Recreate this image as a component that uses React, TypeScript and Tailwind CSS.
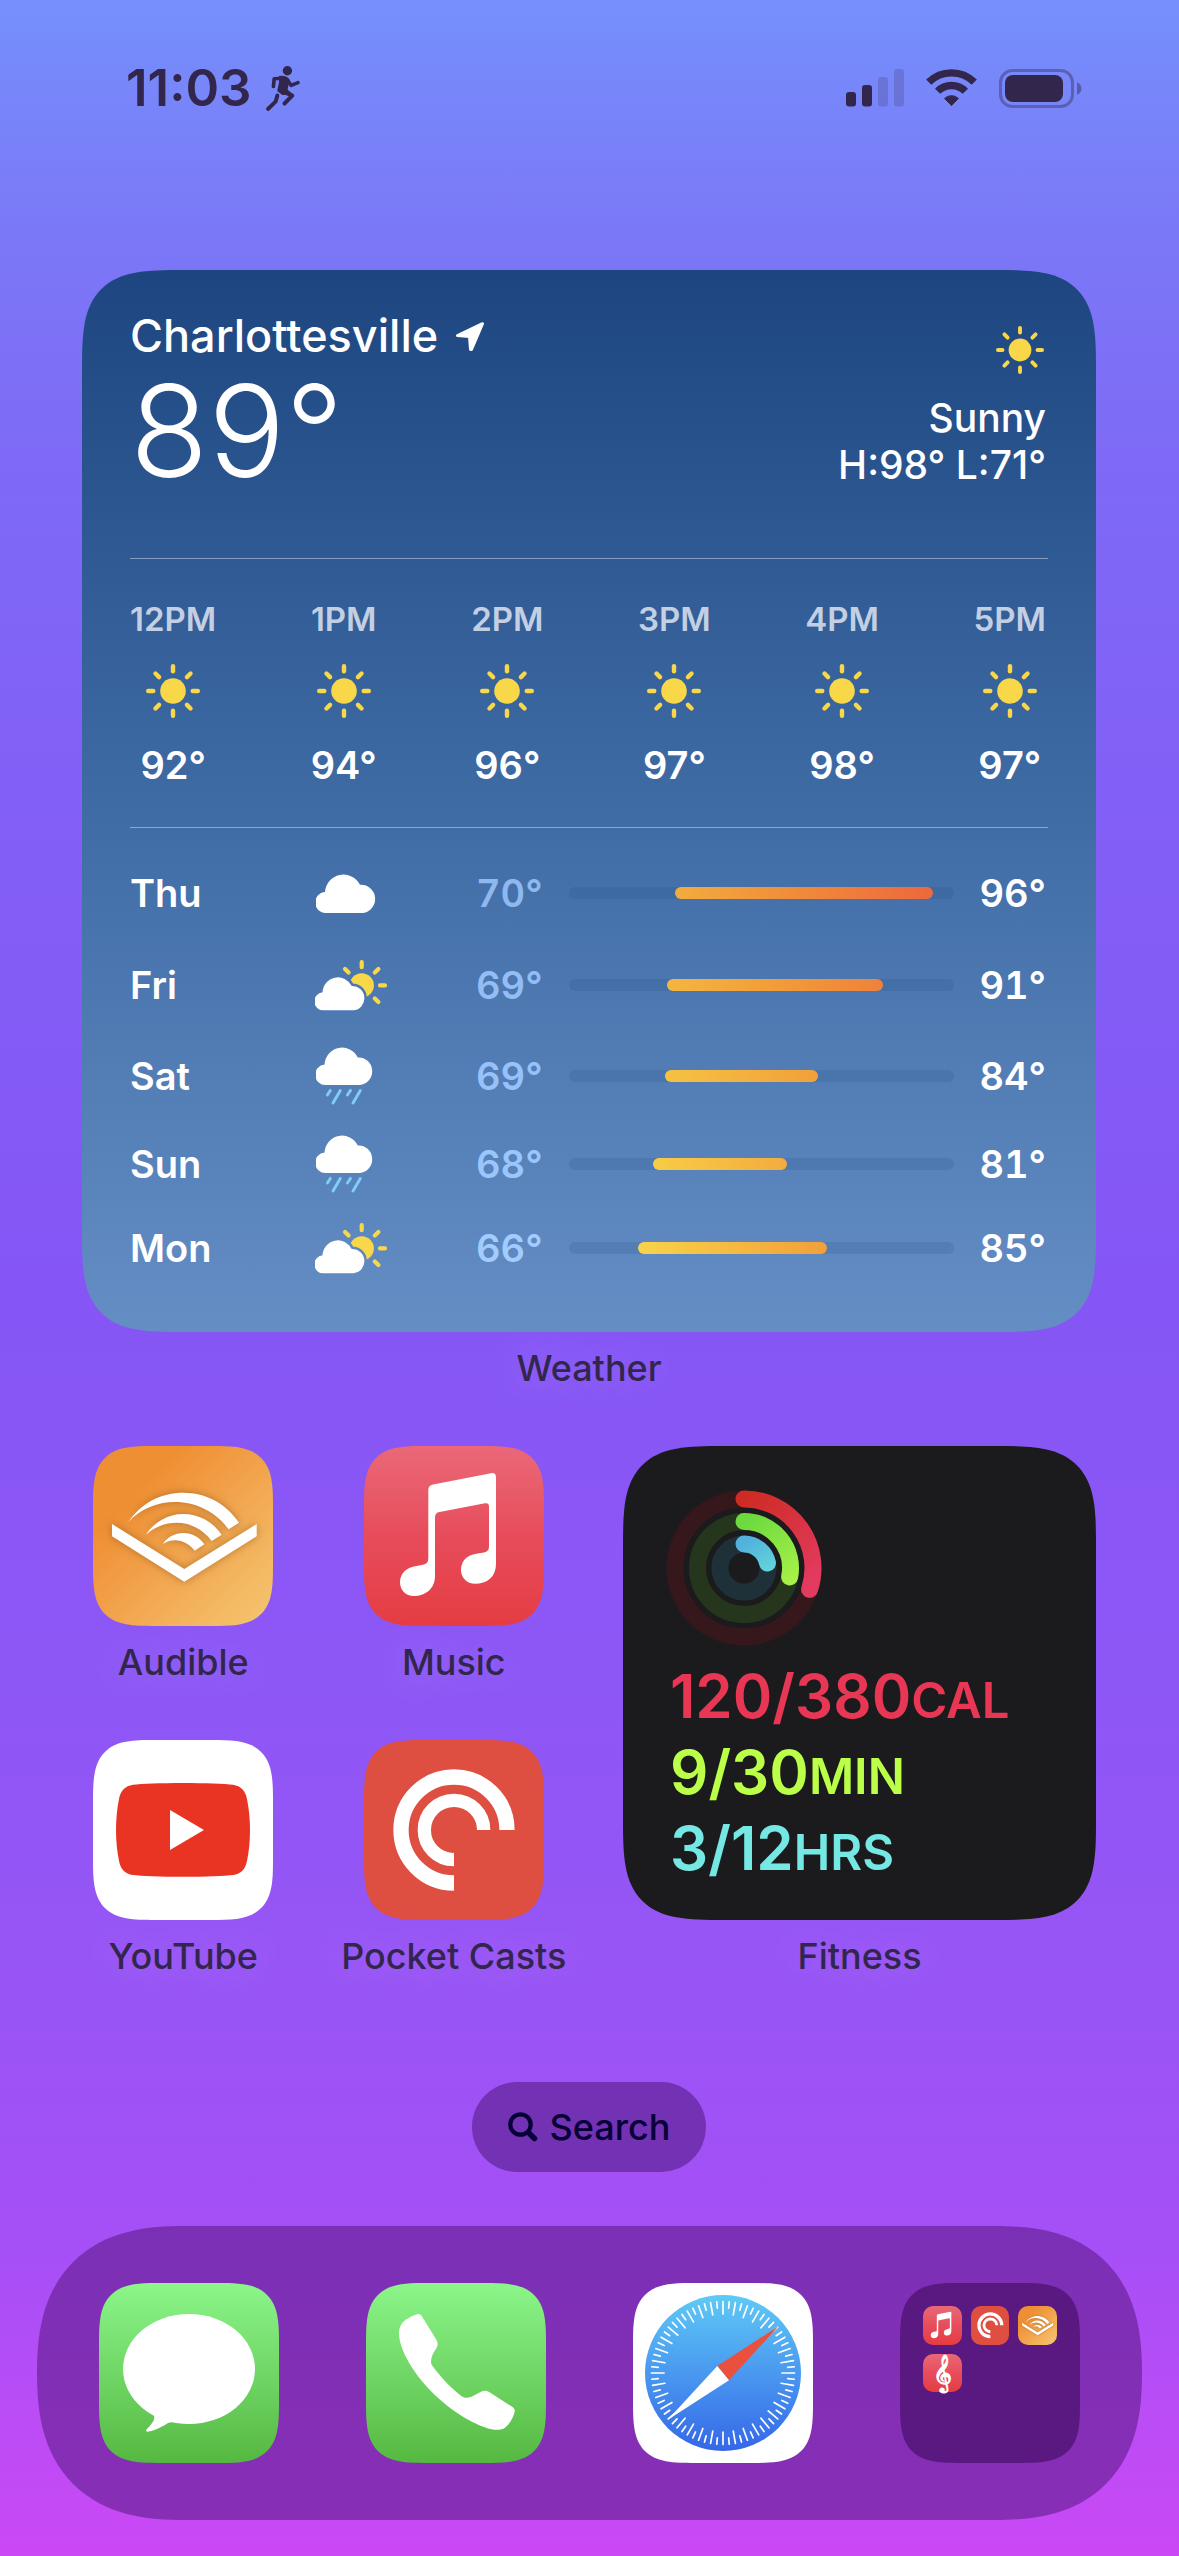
import React from "react";

const INK = "#33264d";

/* ---------- status bar glyphs ---------- */

function RunnerIcon() {
  return (
    <svg width="38" height="48" viewBox="0 0 38 48" fill="none" stroke={INK} strokeLinecap="round" strokeLinejoin="round" aria-hidden="true">
      <circle cx="24.4" cy="6.7" r="4.7" fill={INK} stroke="none" />
      <path d="M10.4 22.5 L11.2 14.8 L20 14.2" strokeWidth="3.6" />
      <path d="M17 12.8 C22 12.4 24 13.4 25.6 16.2 L24.4 21 L23.4 26 L27.5 29.5 L20 30 L15.4 26.5 L17.2 18 Z" fill={INK} strokeWidth="2.2" />
      <path d="M23.8 15.4 L28.2 21.4 L35 18.6" strokeWidth="3.6" />
      <path d="M18.5 26.5 L29.2 31.6 L21.6 39.4" strokeWidth="4.2" />
      <path d="M14.4 31.4 L12.6 37.6 L5 45" strokeWidth="3.9" />
    </svg>
  );
}

function SignalIcon() {
  return (
    <svg width="58" height="38" viewBox="0 0 58 38" fill={INK} aria-label="Signal" role="img">
      <rect x="0" y="23" width="10" height="14.5" rx="3" />
      <rect x="16" y="16" width="10" height="21.5" rx="3" />
      <rect x="32" y="8" width="10" height="29.5" rx="3" opacity="0.2" />
      <rect x="48" y="0" width="10" height="37.5" rx="3" opacity="0.2" />
    </svg>
  );
}

function WifiIcon() {
  return (
    <svg width="51" height="38" viewBox="0 0 51 38" fill="none" stroke={INK} strokeWidth="7.3" aria-label="Wi-Fi" role="img">
      <path d="M2.7 13.2 A32.3 32.3 0 0 1 48.3 13.2" />
      <path d="M11.6 22.3 A19.6 19.6 0 0 1 39.4 22.3" />
      <path d="M18.6 29.4 A10 10 0 0 1 32.4 29.4 L25.5 36.6 Z" fill={INK} strokeWidth="1" strokeLinejoin="round" />
    </svg>
  );
}

function BatteryIcon() {
  return (
    <svg width="83" height="39" viewBox="0 0 83 39" fill="none" aria-label="Battery" role="img">
      <rect x="1.5" y="1.5" width="72" height="36" rx="12" stroke={INK} strokeWidth="3" opacity="0.4" />
      <rect x="6" y="6" width="58" height="27" rx="8" fill={INK} />
      <path d="M78 13.2 C81 14.5 82.4 16.8 82.4 19.5 C82.4 22.2 81 24.5 78 25.8 Z" fill={INK} opacity="0.45" />
    </svg>
  );
}

/* ---------- weather glyphs ---------- */

const YELLOW = "#f8d749";

function SunIcon({ className }: { className: string }) {
  return (
    <svg className={className} viewBox="0 0 54 54" aria-hidden="true">
      <circle cx="27" cy="27" r="12.8" fill={YELLOW} />
      {[0, 45, 90, 135, 180, 225, 270, 315].map((a) => (
        <path key={a} d="M27 2.2 V7.3" stroke={YELLOW} strokeWidth="4.4" strokeLinecap="round" transform={`rotate(${a} 27 27)`} />
      ))}
    </svg>
  );
}

const CLOUD = "M10.5 39 A10.5 10.5 0 0 1 9 18 A18.5 18.5 0 0 1 44 10.8 A14.1 14.1 0 1 1 46 39 Z";

function CloudIcon() {
  return (
    <svg width="60" height="39" viewBox="0 0 60 39" className="ml-px" aria-label="Cloudy" role="img">
      <path d={CLOUD} fill="#fff" />
    </svg>
  );
}

function PartlyIcon({ id }: { id: string }) {
  return (
    <svg width="73" height="51" viewBox="0 0 73 51" aria-label="Partly cloudy" role="img">
      <mask id={id}>
        <rect width="73" height="51" fill="#fff" />
        <path d={CLOUD} transform="translate(0 16.8) scale(.835 .86)" fill="#000" stroke="#000" strokeWidth="6" />
      </mask>
      <circle cx="46.7" cy="25.4" r="12.2" fill={YELLOW} mask={`url(#${id})`} />
      <path
        d="M46.7 2.2 V7.2 M65 25.4 H70 M30 9 L33.6 12.6 M63.4 9 L59.8 12.6 M59.8 38.4 L63.4 42"
        stroke={YELLOW}
        strokeWidth="4.2"
        strokeLinecap="round"
      />
      <path d={CLOUD} transform="translate(0 16.8) scale(.835 .86)" fill="#fff" />
    </svg>
  );
}

function RainIcon() {
  return (
    <svg width="57" height="58" viewBox="0 0 57 58" className="ml-px" aria-label="Rain" role="img">
      <path d={CLOUD} transform="scale(.95 .975)" fill="#fff" />
      <path
        d="M14.3 43.4 L11.4 48 M24.3 43.4 L17 56 M34.5 43.4 L31.4 48 M44.3 43.4 L37 56"
        stroke="#7fcdf8"
        strokeWidth="2.9"
        strokeLinecap="round"
      />
    </svg>
  );
}

/* ---------- app artwork, drawn on a 180 grid ---------- */

function AudibleArt() {
  return (
    <svg viewBox="0 0 180 180" className="size-full" fill="#fff" aria-hidden="true">
      <g className="drop-shadow-[0_0_4px_rgba(120,70,10,0.5)]">
        <path d="M19 78 L91.3 123 L163.7 78 V90.3 L91.3 135.7 L19 90.3 Z" />
        <path d="M35.3 76.3 C48 57 68 46.7 90.3 46.7 C113 46.7 133 57.5 146 76.7 L135.7 83.3 C123 66 103 56 82 56 C64 56 47 63 35.3 76.3 Z" />
        <path d="M52.7 89 C61 76 75 68 90.3 68 C106 68 120 76 128.7 88.7 L118.7 95 C110 83 97 76.7 83.7 76.7 C72 76.7 61 81 52.7 89 Z" />
        <path d="M69.7 98.3 C74 91 82 87 90.3 87 C99 87 106.5 91 111.3 98.3 L101.7 104.7 C97 98.5 90 94.3 82 94.3 C77.5 94.3 73 95.7 69.7 98.3 Z" />
      </g>
    </svg>
  );
}

function MusicArt() {
  return (
    <svg viewBox="0 0 180 180" className="size-full" fill="#fff" aria-hidden="true">
      <path d="M64.3 44 Q64.3 39.3 69 38.4 L127 27.2 Q132 26.5 132 31.5 L132 118 C132 131 123 137.7 111 137.7 C103 137.7 97 132 97 124 C97 114.5 103.5 109 112 107.7 L120 106.4 Q125 105.5 125 100.5 L125 60.5 Q125 56.5 121 57.3 L75.5 65.9 Q71 66.7 71 71 L71 130 C71 143 61 150 50 150 C41.5 150 36 144 36 136.3 C36 127 43 121.5 51 120.2 L59 118.8 Q64.3 118 64.3 112.5 Z" />
    </svg>
  );
}

function YouTubeArt() {
  return (
    <svg viewBox="0 0 180 180" className="size-full" aria-hidden="true">
      <path
        d="M90 43 C112 43 132 43.8 140 44.8 C148 46 152.5 51 154 59 C156 69 157 79 157 90 C157 101 156 111 154 121 C152.5 129 148 134 140 135 C132 136 112 136.8 90 136.8 C68 136.8 48 136 40 135 C32 134 27.5 129 26 121 C24 111 23 101 23 90 C23 79 24 69 26 59 C27.5 51 32 46 40 44.8 C48 43.8 68 43 90 43 Z"
        fill="#e93323"
      />
      <path d="M77 70 L111 90 L77 110 Z" fill="#fff" />
    </svg>
  );
}

function PocketCastsArt() {
  return (
    <svg viewBox="0 0 180 180" className="size-full" fill="none" stroke="#fff" aria-hidden="true">
      <path d="M143 90 A53 53 0 1 0 90 143" strokeWidth="15.3" />
      <path d="M119.7 90 A29.7 29.7 0 1 0 90 119.7" strokeWidth="13.3" />
    </svg>
  );
}

function MessagesArt() {
  return (
    <svg viewBox="0 0 180 180" className="size-full" fill="#fff" aria-hidden="true">
      <ellipse cx="90" cy="86" rx="66" ry="55" />
      <path d="M50 127 C57 133 58 136 47.5 146.5 C46.5 148 47.5 149 49.5 148.6 C58 147 64 143 69 140 C71 139 72.5 139 76 139.4 L80 120 Z" />
    </svg>
  );
}

function PhoneArt() {
  return (
    <svg viewBox="0 0 180 180" className="size-full" fill="#fff" aria-hidden="true">
      <path d="M49 32 C53 30.3 54.5 31 56 33.5 L70.5 57 C72 60 72 62.5 70 66 C67 70 65 74 65 79 C65 81 66 82.5 68 85 C76 95.5 86 106 96 113.5 C99 115.5 102 115 105.5 113.8 L115 108.7 C118.5 107.3 121 107.6 124 109.5 L146.5 124 C149 125.8 149.3 127.5 148 131 C146 137 143 141.5 139 144.8 C135 147.5 129 147.3 122 145.5 C100 138 80 124 62 105 C48 90 33 67 33 50 C33 40 40 35.5 49 32 Z" />
    </svg>
  );
}

function SafariArt() {
  return (
    <svg viewBox="0 0 180 180" className="size-full" aria-hidden="true">
      <defs>
        <linearGradient id="safari-dial" x1="0" y1="0" x2="0" y2="1">
          <stop offset="0" stopColor="#5fcaf6" />
          <stop offset="1" stopColor="#3467e8" />
        </linearGradient>
      </defs>
      <circle cx="90" cy="90" r="78" fill="url(#safari-dial)" />
      {Array.from({ length: 72 }, (_, i) => (
        <path
          key={i}
          d={i % 2 === 0 ? "M90 18.5 V31" : "M90 18.5 V25"}
          stroke="#fff"
          strokeWidth="1.7"
          strokeLinecap="round"
          transform={`rotate(${i * 5} 90 90)`}
        />
      ))}
      <path d="M145.7 43 L84.3 83 L96 97.3 Z" fill="#e9503e" />
      <path d="M34.5 137 L84.3 83 L96 97.3 Z" fill="#fff" />
    </svg>
  );
}

/* ---------- continuous corners, with a plain radius where unsupported ---------- */

const CARD_CORNERS =
  "rounded-[72px] supports-[corner-shape:squircle]:rounded-[100px] supports-[corner-shape:squircle]:[corner-shape:superellipse(1.7)]";
const ICON_CORNERS =
  "rounded-[44px] supports-[corner-shape:squircle]:rounded-[62px] supports-[corner-shape:squircle]:[corner-shape:superellipse(1.7)]";
const DOCK_CORNERS =
  "rounded-[130px] supports-[corner-shape:squircle]:rounded-[147px] supports-[corner-shape:squircle]:[corner-shape:superellipse(1.3)]";

/* ---------- widgets ---------- */

const hours = [
  { time: "12PM", temp: "92°" },
  { time: "1PM", temp: "94°" },
  { time: "2PM", temp: "96°" },
  { time: "3PM", temp: "97°" },
  { time: "4PM", temp: "98°" },
  { time: "5PM", temp: "97°" },
];

const days = [
  { day: "Thu", icon: <CloudIcon />, low: "70°", high: "96°", left: 27.5, width: 67, row: "h-[92px]", lowColor: "text-[#8fb8ef]", bar: "from-[#f2ac3e] via-[#f0893a] to-[#ec673d]" },
  { day: "Fri", icon: <PartlyIcon id="fri-sun" />, low: "69°", high: "91°", left: 25.5, width: 56, row: "h-[92px]", lowColor: "text-[#93bdf4]", bar: "from-[#f4b640] via-[#f29c38] to-[#ee823b]" },
  { day: "Sat", icon: <RainIcon />, low: "69°", high: "84°", left: 25, width: 39.7, row: "h-[90px]", lowColor: "text-[#97c1f8]", bar: "from-[#f5c243] to-[#f1a03a]" },
  { day: "Sun", icon: <RainIcon />, low: "68°", high: "81°", left: 21.8, width: 34.8, row: "h-[86px]", lowColor: "text-[#9bc6fb]", bar: "from-[#f7cc47] to-[#f3ac3e]" },
  { day: "Mon", icon: <PartlyIcon id="mon-sun" />, low: "66°", high: "85°", left: 17.9, width: 49.1, row: "h-[82px]", lowColor: "text-[#a1ccfd]", bar: "from-[#f8d34a] to-[#f19f3a]" },
];

function WeatherWidget() {
  return (
    <section
      aria-label="Weather"
      className={`bg-linear-to-b from-[#1d4680] via-[#3f6ba5] to-[#648ec4] px-12 pt-[39px] pb-[43px] text-white ${CARD_CORNERS}`}
    >
      <div className="flex justify-between">
        <div>
          <div className="flex items-center gap-[18px]">
            <h2 className="text-[45px] leading-[54px] font-medium">Charlottesville</h2>
            <svg width="28" height="29" viewBox="0 0 28 29" fill="#fff" stroke="#fff" strokeWidth="3" strokeLinejoin="round" aria-hidden="true">
              <path d="M1.5 13.5 L26.5 1.7 L15.5 27.5 L14.5 27.5 L13.5 14.5 Z" />
            </svg>
          </div>
          <p className="text-[128px] leading-[136px] font-light">89°</p>
        </div>
        <div className="flex flex-col items-end pt-[17px] pr-0.5 text-[39px] leading-[47px] font-medium">
          <SunIcon className="mr-0.5 mb-5 size-12" />
          <span>Sunny</span>
          <span>H:98° L:71°</span>
        </div>
      </div>

      <hr className="mt-[59px] border-0 border-t border-white/40" />

      <ul className="mt-10 flex justify-between pr-0.5">
        {hours.map((h) => (
          <li key={h.time} className="flex flex-col items-center">
            <span className="text-[33px] leading-10 font-semibold text-[#c3d0e3]">{h.time}</span>
            <SunIcon className="mt-[25px] size-[54px]" />
            <span className="mt-[23px] text-[38px] leading-12 font-semibold">{h.temp}</span>
          </li>
        ))}
      </ul>

      <hr className="mt-[38px] border-0 border-t border-white/40" />

      <ul className="mt-[19px] pr-0.5 text-[38px] leading-12 font-semibold tabular-nums">
        {days.map((d) => (
          <li key={d.day} className={`grid grid-cols-[185px_161px_93px_1fr_92px] items-center ${d.row}`}>
            <span>{d.day}</span>
            {d.icon}
            <span className={d.lowColor}>{d.low}</span>
            <div className="h-3 rounded-full bg-[#1e4678]/15">
              <div className={`h-full rounded-full bg-linear-to-r ${d.bar}`} style={{ marginLeft: `${d.left}%`, width: `${d.width}%` }} />
            </div>
            <span className="text-right">{d.high}</span>
          </li>
        ))}
      </ul>
    </section>
  );
}

function ringPoint(r: number, deg: number) {
  const a = (deg * Math.PI) / 180;
  return `${78 + r * Math.sin(a)} ${78 - r * Math.cos(a)}`;
}

const rings = [
  { id: "move", r: 69, end: 108, track: "#36181c", from: "#cf2b25", to: "#e23b5f" },
  { id: "exercise", r: 46.5, end: 101, track: "#25361d", from: "#6cd93f", to: "#a5f048" },
  { id: "stand", r: 24, end: 78, track: "#1e3038", from: "#52b2dd", to: "#66dbd9" },
];

const goals = [
  { value: "120/380", unit: "CAL", color: "text-[#e83655]" },
  { value: "9/30", unit: "MIN", color: "text-[#bbff49]" },
  { value: "3/12", unit: "HRS", color: "text-[#75e8e3]" },
];

function FitnessWidget() {
  return (
    <section aria-label="Fitness" className={`flex h-[474px] w-full flex-col bg-[#1b1b1d] pt-11 pl-[43px] text-left ${CARD_CORNERS}`}>
      <svg width="156" height="156" viewBox="0 0 156 156" fill="none" strokeWidth="17" aria-hidden="true">
        {rings.map((g) => (
          <g key={g.id}>
            <linearGradient id={g.id} gradientUnits="userSpaceOnUse" x1="78" y1={78 - g.r} x2={78 + g.r} y2="90">
              <stop offset="0" stopColor={g.from} />
              <stop offset="1" stopColor={g.to} />
            </linearGradient>
            <circle cx="78" cy="78" r={g.r} stroke={g.track} />
            <path d={`M${ringPoint(g.r, 0)} A${g.r} ${g.r} 0 0 1 ${ringPoint(g.r, g.end)}`} stroke={`url(#${g.id})`} strokeLinecap="round" />
          </g>
        ))}
      </svg>
      <ul className="mt-3 pl-1 font-semibold">
        {goals.map((g) => (
          <li key={g.unit} className={`flex h-[76px] items-baseline text-[60px] leading-[76px] ${g.color}`}>
            {g.value}
            <span className="text-[49px] leading-none">{g.unit}</span>
          </li>
        ))}
      </ul>
    </section>
  );
}

/* ---------- home screen ---------- */

function Label({ children }: { children: React.ReactNode }) {
  return (
    <span className="mt-3 text-center text-4xl leading-12 font-medium whitespace-nowrap text-[#33264d] [text-shadow:0_0_44px_rgba(255,255,255,0.25)]">
      {children}
    </span>
  );
}

const AUDIBLE_BG = "bg-linear-to-br from-[#ef8f34] from-25% to-[#f5c671]";
const MUSIC_BG = "bg-linear-to-b from-[#ea6878] via-[#e74c5b] to-[#e53c42]";

const apps = [
  { name: "Audible", art: <AudibleArt />, bg: AUDIBLE_BG },
  { name: "Music", art: <MusicArt />, bg: MUSIC_BG },
  { name: "YouTube", art: <YouTubeArt />, bg: "bg-white" },
  { name: "Pocket Casts", art: <PocketCastsArt />, bg: "bg-[#de4e41]" },
];

const dock = [
  { name: "Messages", art: <MessagesArt />, bg: "bg-linear-to-b from-[#8cf68a] to-[#55b840]" },
  { name: "Phone", art: <PhoneArt />, bg: "bg-linear-to-b from-[#8cf68a] to-[#55b840]" },
  { name: "Safari", art: <SafariArt />, bg: "bg-white" },
];

export default function App() {
  return (
    <div className="flex min-h-screen w-full flex-col bg-[linear-gradient(to_bottom,#7590fb_0%,#7b78f7_9%,#7e6af6_18%,#8260f6_30%,#8556f5_50%,#8d57f5_66%,#9a54f5_79%,#a64ff6_88%,#b94df6_94%,#ca48f5_100%)] font-[Inter,sans-serif]">
      <header className="mt-16 mb-[158px] flex h-12 items-center justify-between pr-[97px] pl-[126px] text-[#33264d]">
        <div className="flex items-center gap-3">
          <time className="text-[51px] leading-12 font-semibold">11:03</time>
          <RunnerIcon />
        </div>
        <div className="flex items-center gap-[22px]">
          <SignalIcon />
          <WifiIcon />
          <BatteryIcon />
        </div>
      </header>

      <main className="flex flex-col pr-[83px] pl-[82px]">
        <WeatherWidget />
        <Label>Weather</Label>

        <div className="mt-[54px] grid grid-flow-col grid-cols-4 grid-rows-2 gap-x-[68px] gap-y-[54px]">
          {[apps[0], apps[2], apps[1], apps[3]].map((a) => (
            <button key={a.name} type="button" className="flex flex-col items-center">
              <span className={`block size-[180px] overflow-hidden ${ICON_CORNERS} ${a.bg}`}>{a.art}</span>
              <Label>{a.name}</Label>
            </button>
          ))}
          <div className="col-span-2 row-span-2 flex flex-col">
            <FitnessWidget />
            <Label>Fitness</Label>
          </div>
        </div>

        <button
          type="button"
          className="mx-auto mt-[102px] flex h-[90px] items-center gap-3 rounded-full bg-[#7331b4] px-9 text-4xl leading-12 font-medium text-[#060037]"
        >
          <svg width="30" height="30" viewBox="0 0 30 30" fill="none" stroke="currentColor" strokeLinecap="round" aria-hidden="true">
            <circle cx="12.5" cy="12.5" r="10.2" strokeWidth="4.2" />
            <path d="M20.5 20.5 L26.5 26.5" strokeWidth="5.4" />
          </svg>
          Search
        </button>
      </main>

      <nav
        aria-label="Dock"
        className={`mx-[37px] mt-[54px] mb-9 flex justify-between bg-linear-to-b from-[#7a30b5] to-[#882eb6] px-[62px] py-[57px] ${DOCK_CORNERS}`}
      >
        {dock.map((a) => (
          <button key={a.name} type="button" aria-label={a.name} className={`block size-[180px] overflow-hidden ${ICON_CORNERS} ${a.bg}`}>
            {a.art}
          </button>
        ))}
        <button
          type="button"
          aria-label="Folder"
          className={`grid size-[180px] grid-cols-3 content-start gap-[9px] bg-[#5a1881] px-[23px] py-[23px] ${ICON_CORNERS}`}
        >
          <span className={`block aspect-square overflow-hidden rounded-[10px] ${MUSIC_BG}`}>
            <MusicArt />
          </span>
          <span className="block aspect-square overflow-hidden rounded-[10px] bg-[#de4e41]">
            <PocketCastsArt />
          </span>
          <span className={`block aspect-square overflow-hidden rounded-[10px] ${AUDIBLE_BG}`}>
            <AudibleArt />
          </span>
          <span className={`flex aspect-square items-center justify-center rounded-[10px] text-[32px] leading-9 font-bold text-white ${MUSIC_BG}`}>
            <span className="font-['DejaVu_Sans',sans-serif]">{"\u{1D11E}"}</span>
          </span>
        </button>
      </nav>
    </div>
  );
}
